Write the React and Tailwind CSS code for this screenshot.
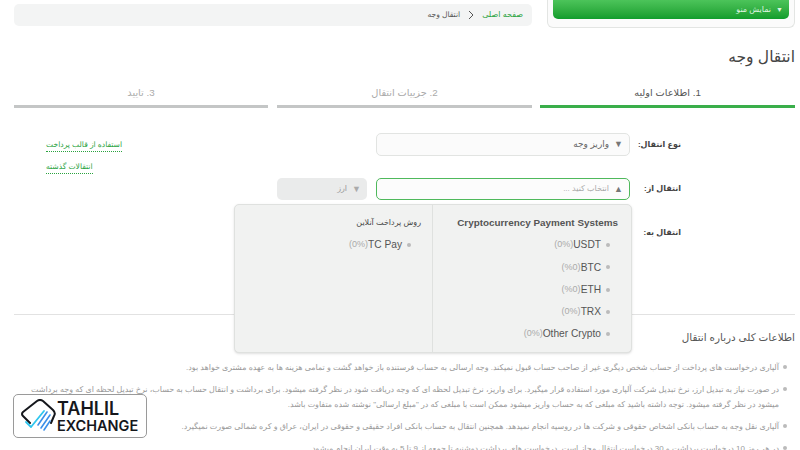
import React from 'react';

const arrowCls = 'text-[9px] leading-none text-[#777]';

const tabs = [
    { id: 1, label: '1. اطلاعات اولیه', cls: 'ml-[8px] w-[255px] border-[#3aae4a] text-[#555]' },
    { id: 2, label: '2. جزییات انتقال', cls: 'ml-[9px] w-[255px] border-[#c4c6c6] text-[#aaa]' },
    { id: 3, label: '3. تایید', cls: 'w-[254px] border-[#c4c6c6] text-[#aaa]' },
];

const crypto = [
    { name: 'USDT', fee: '(0%)' },
    { name: 'BTC', fee: '(%0)' },
    { name: 'ETH', fee: '(%0)' },
    { name: 'TRX', fee: '(0%)' },
    { name: 'Other Crypto', fee: '(0%)' },
];

const notes = [
    'آلپاری درخواست های پرداخت از حساب شخص دیگری غیر از صاحب حساب قبول نمیکند. وجه ارسالی به حساب فرستنده باز خواهد گشت و تمامی هزینه ها به عهده مشتری خواهد بود.',
    'در صورت نیاز به تبدیل ارز، نرخ تبدیل شرکت آلپاری مورد استفاده قرار میگیرد. برای واریز، نرخ تبدیل لحظه ای که وجه دریافت شود در نظر گرفته میشود. برای برداشت و انتقال حساب به حساب، نرخ تبدیل لحظه ای که وجه برداشت میشود در نظر گرفته میشود. توجه داشته باشید که مبلغی که به حساب واریز میشود ممکن است با مبلغی که در "مبلغ ارسالی" نوشته شده متفاوت باشد.',
    'آلپاری نقل وجه به حساب بانکی اشخاص حقوقی و شرکت ها در روسیه انجام نمیدهد. همچنین انتقال به حساب بانکی افراد حقیقی و حقوقی در ایران، عراق و کره شمالی صورت نمیگیرد.',
    'در هر روز 10 درخواست برداشت و 30 درخواست انتقال مجاز است. درخواست های برداشت دوشنبه تا جمعه از 9 تا 5 به وقت ایران انجام میشود',
];

function PayItem({ name, fee }) {
    return (
        <div className="flex h-[22.25px] items-center">
            <span className="mr-[8px] ml-[5px] h-[4px] w-[4px] rounded-full bg-[#bbb]" />
            <span className="text-[10.2px] text-[#555]">{name}</span>
            <span dir="ltr" className="text-[9px] text-[#aaa]">{fee}</span>
        </div>
    );
}

function Logo() {
    return (
        <div dir="ltr" className="absolute bottom-[12px] left-[13px] flex h-[44px] w-[134px] items-center rounded-[5px] border border-[#9a9a9a] bg-white pl-[7px]">
            <svg width="36" height="34" viewBox="0 0 36 34" fill="none">
                <path d="M9 24 L2 17 Q0 15 2 13 L16 2 Q19 0 22 2 L32 11 Q35 14 33 17 L30 24" stroke="#15171c" strokeWidth="2" strokeLinecap="round" strokeLinejoin="round" />
                <path d="M5 23 L10 28 L23 12" stroke="#2fc6ee" strokeWidth="1.8" strokeLinecap="round" strokeLinejoin="round" />
                <path d="M17 26 L26 13 M20 29 L29 16 M23 31 L29 22" stroke="#3b8fe8" strokeWidth="1.6" strokeLinecap="round" />
            </svg>
            <div className="flex flex-col font-['Inter',sans-serif] font-semibold text-[#15171c]">
                <span className="text-[18px] leading-[18px]">TAHLIL</span>
                <span className="text-[14.5px] leading-[15px]">EXCHANGE</span>
            </div>
        </div>
    );
}

export default function App() {
    return (
        <div dir="rtl" className="relative h-[450px] w-[800px] overflow-hidden bg-white pr-[5px] pl-[14px] font-['Liberation_Sans','DejaVu_Sans',sans-serif] text-[#444]">
            <div className="flex h-[42px] items-start gap-[15px]">
                <div className="h-[28px] w-[248px] rounded-b-[6px] border border-t-0 border-[#e3e5e3] bg-[#fbfbfb] px-[5px]">
                    <div className="flex h-[19px] items-center rounded-b-[5px] bg-gradient-to-b from-[#4cc45a] to-[#0f9d2c] pr-[6px] text-[8px] text-[#dff5e0]">
                        <span className="ml-[5px] text-[7px] leading-none">▼</span>
                        نمایش منو
                    </div>
                </div>
                <div className="mt-[4px] flex h-[22px] flex-1 items-center rounded-[5px] bg-[#f3f4f4] pr-[9px] text-[8px]">
                    <span className="text-[#2aa33f]">صفحه اصلی</span>
                    <svg width="6" height="10" viewBox="0 0 6 10" fill="none" className="mx-[8px]">
                        <path d="M1 1 L5 5 L1 9" stroke="#555" strokeWidth="1" />
                    </svg>
                    <span className="text-[7.6px] text-[#555]">انتقال وجه</span>
                </div>
            </div>

            <h1 className="mt-[3px] h-[23px] text-[15.5px] leading-[23px] font-normal text-[#444]">انتقال وجه</h1>

            <div className="mt-[14px] flex">
                {tabs.map((tab) => (
                    <div key={tab.id} className={`h-[26px] border-b-[3px] text-center text-[9.8px] leading-[22px] ${tab.cls}`}>
                        {tab.label}
                    </div>
                ))}
            </div>

            <div className="mt-[25px] flex h-[182px] border-b border-[#e2e2e2]">
                <div className="w-[165px] pt-[1px] pr-[114px] text-[8px] font-bold whitespace-nowrap text-[#444]">
                    <div className="h-[44px] leading-[22px]">نوع انتقال:</div>
                    <div className="h-[44px] leading-[22px]">انتقال از:</div>
                    <div className="leading-[22px]">انتقال به:</div>
                </div>
                <div className="flex flex-col gap-[22px]">
                    <div className="flex h-[23px] w-[254px] items-center rounded-[5px] border border-[#e2e4e2] bg-[#fbfbfb] pr-[6px] text-[9px] text-[#666]">
                        <span className={`ml-[5px] ${arrowCls}`}>▼</span>
                        واریز وجه
                    </div>
                    <div className="flex gap-[9px]">
                        <div className="flex h-[22px] w-[254px] items-center rounded-[5px] border border-[#4fb95c] bg-[#fcfcfc] pr-[6px] text-[8px] text-[#aaa]">
                            <span className={`ml-[5px] ${arrowCls}`}>▲</span>
                            انتخاب کنید ...
                        </div>
                        <div className="flex h-[22px] w-[90px] items-center rounded-[5px] bg-[#eaebeb] pr-[6px] text-[8px] text-[#999]">
                            <span className="ml-[5px] text-[9px] leading-none text-[#aaa]">▼</span>
                            ارز
                        </div>
                    </div>
                </div>
                <div className="mr-auto ml-[32px] flex flex-col items-end gap-[8px] pt-[5px] text-[7.6px] whitespace-nowrap text-[#2aa33f]">
                    <span className="border-b border-dotted border-[#2aa33f] leading-[13px]">استفاده از قالب پرداخت</span>
                    <span className="border-b border-dotted border-[#2aa33f] leading-[13px]">انتقالات گذشته</span>
                </div>
            </div>

            <h2 className="mt-[15px] text-[10.4px] leading-[16px] font-normal text-[#555]">اطلاعات کلی درباره انتقال</h2>
            <ul className="mt-[14px] flex flex-col gap-[7px] text-[7.95px] leading-[15px] text-[#999]">
                {notes.map((note, i) => (
                    <li key={i} className="flex pr-[8px]">
                        <span className="mt-[5px] ml-[4px] h-[4px] w-[4px] shrink-0 rounded-full bg-[#bbb]" />
                        <span>{note}</span>
                    </li>
                ))}
            </ul>

            {/* dropdown that opens over the form */}
            <div className="absolute top-[204px] left-[234px] flex h-[149px] w-[398px] rounded-[5px] border border-[#dfe1df] bg-[#f1f2f1] shadow-sm">
                <div className="w-[199px] border-l border-[#dfe1df] pt-[8px] pr-[13px]">
                    <div className="h-[21px] text-[9.9px] leading-[20px] font-bold text-[#555]">Cryptocurrency Payment Systems</div>
                    {crypto.map((item) => (
                        <PayItem key={item.name} name={item.name} fee={item.fee} />
                    ))}
                </div>
                <div className="flex-1 pt-[8px] pr-[11px]">
                    <div className="h-[21px] text-[8px] leading-[20px] font-normal text-[#444]">روش پرداخت آنلاین</div>
                    <div className="pr-[2px]">
                        <PayItem name="TC Pay" fee="(0%)" />
                    </div>
                </div>
            </div>

            <Logo />
        </div>
    );
}
